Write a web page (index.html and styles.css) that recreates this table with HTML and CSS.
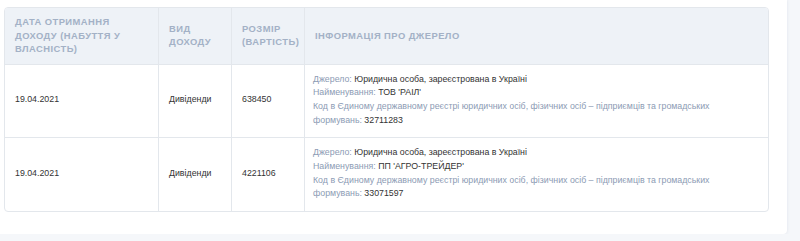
FILE: index.html
```html
<!DOCTYPE html>
<html lang="uk">
<head>
<meta charset="utf-8">
<link rel="stylesheet" href="styles.css">
</head>
<body>
<div class="card">
  <table class="income">
    <colgroup>
      <col class="c1"><col class="c2"><col class="c3"><col class="c4">
    </colgroup>
    <thead>
      <tr>
        <th>Дата отримання доходу (набуття у власність)</th>
        <th>Вид доходу</th>
        <th>Розмір (вартість)</th>
        <th>Інформація про джерело</th>
      </tr>
    </thead>
    <tbody>
      <tr>
        <td>19.04.2021</td>
        <td>Дивіденди</td>
        <td>638450</td>
        <td class="info">
          <div><span class="lbl">Джерело:</span> Юридична особа, зареєстрована в Україні</div>
          <div><span class="lbl">Найменування:</span> ТОВ 'РАІЛ'</div>
          <div><span class="lbl">Код в Єдиному державному реєстрі юридичних осіб, фізичних осіб – підприємців та громадських формувань:</span> 32711283</div>
        </td>
      </tr>
      <tr>
        <td>19.04.2021</td>
        <td>Дивіденди</td>
        <td>4221106</td>
        <td class="info">
          <div><span class="lbl">Джерело:</span> Юридична особа, зареєстрована в Україні</div>
          <div><span class="lbl">Найменування:</span> ПП 'АГРО-ТРЕЙДЕР'</div>
          <div><span class="lbl">Код в Єдиному державному реєстрі юридичних осіб, фізичних осіб – підприємців та громадських формувань:</span> 33071597</div>
        </td>
      </tr>
    </tbody>
  </table>
</div>
</body>
</html>
```
FILE: styles.css
```css
html, body {
  margin: 0;
  padding: 0;
  background: #f5f7fa;
  font-family: "Liberation Sans", Arial, sans-serif;
}
.card {
  width: 787px;
  height: 234px;
  box-sizing: border-box;
  background: #fff;
  padding: 7px 18px 0 4px;
  box-shadow: 0 0 3px rgba(200, 208, 220, 0.5);
  border-bottom-right-radius: 4px;
}
.income {
  width: 765px;
  border-collapse: separate;
  border-spacing: 0;
  border: 1px solid #e3e7ec;
  border-radius: 4px;
  overflow: hidden;
  table-layout: fixed;
}
.c1 { width: 153px; }
.c2 { width: 73px; }
.c3 { width: 73px; }
.income th {
  background: #eef2f7;
  color: #a3b1c6;
  font-size: 9.4px;
  font-weight: bold;
  text-transform: uppercase;
  letter-spacing: 0.45px;
  text-align: left;
  line-height: 13.5px;
  padding: 7px 10px 8px 10px;
  height: 40px;
  border-bottom: 1px solid #e3e7ec;
  border-left: 1px solid #e3e7ec;
}
.income td {
  font-size: 8.8px;
  color: #333;
  line-height: 13.7px;
  padding: 8px 10px 10px 10px;
  vertical-align: middle;
  border-left: 1px solid #e3e7ec;
  border-bottom: 1px solid #e3e7ec;
}
.income th:first-child,
.income td:first-child {
  border-left: none;
}
.income tbody tr:last-child td {
  border-bottom: none;
}
.income td.info {
  padding-left: 8px;
}
.lbl {
  color: #8c9bb4;
}
```
